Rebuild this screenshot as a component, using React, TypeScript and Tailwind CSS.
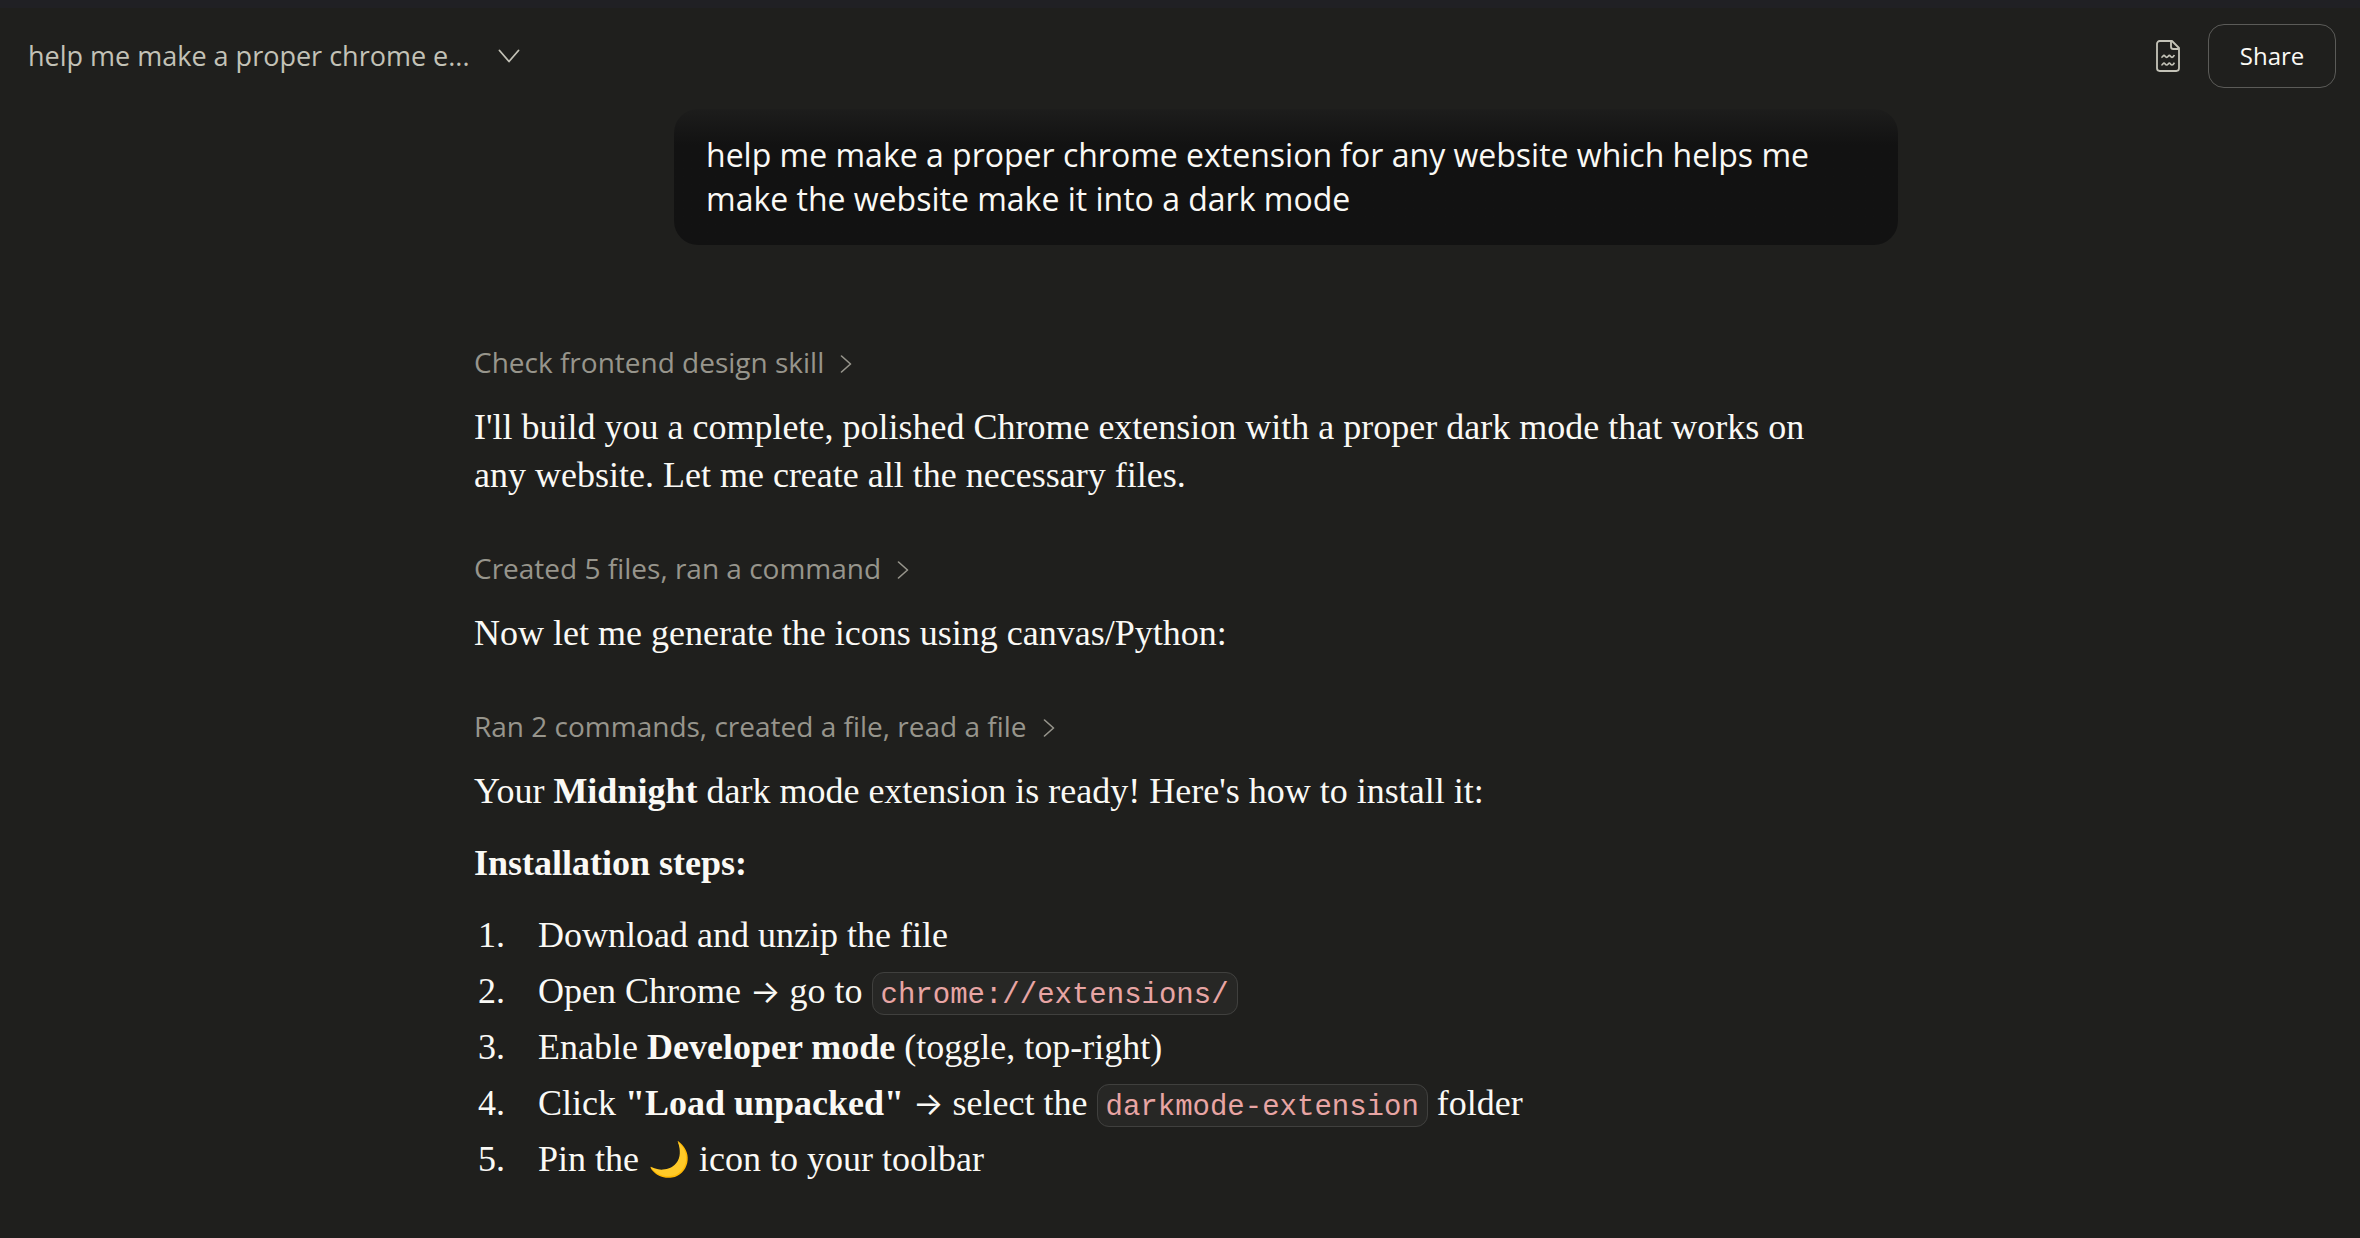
import type { ReactNode } from 'react';

function ChevronDown() {
  return (
    <svg className="w-[22px] h-[14px]" viewBox="0 0 22 14" fill="none" stroke="currentColor" strokeWidth="1.8">
      <path d="M1.5 1.5 11 12.500l9.500-11" strokeLinecap="round" strokeLinejoin="round" />
    </svg>
  );
}

function ChevronRight() {
  return (
    <svg className="w-3 h-[18px] mt-1" viewBox="0 0 12 18" fill="none" stroke="currentColor" strokeWidth="1.6">
      <path d="M1.500 1 10.500 9l-9 8" strokeLinecap="round" strokeLinejoin="round" />
    </svg>
  );
}

function FileIcon() {
  return (
    <svg className="w-6 h-8" viewBox="0 0 72 96" fill="none" stroke="currentColor" strokeWidth="5.500" strokeLinejoin="round">
      <path d="M48 3H11a8 8 0 0 0-8 8v74a8 8 0 0 0 8 8h50a8 8 0 0 0 8-8V24Z" />
      <path d="M45 4v16a7 7 0 0 0 7 7h16" />
      <path
        d="M16 52c4 0 5-6 8-6s4 6 8 6 5-6 8-6 4 6 8 6 5-3 7-7M16 75c4 0 5-6 8-6s4 6 8 6 5-6 8-6 4 6 8 6 5-3 7-7"
        strokeWidth="5"
      />
    </svg>
  );
}

function Header() {
  return (
    <header className="flex items-center justify-between pt-4 pl-7 pr-6 font-['Open_Sans',sans-serif]">
      <button type="button" className="flex items-center gap-7 text-[27px] leading-10 text-[#c3c2b7]">
        help me make a proper chrome e...
        <ChevronDown />
      </button>
      <div className="flex items-center gap-7">
        <button type="button" aria-label="Open file" className="text-[#c3c2b7]">
          <FileIcon />
        </button>
        <button
          type="button"
          className="w-32 h-16 border border-[#5b5b58] rounded-2xl text-2xl font-medium text-[#faf9f5]">
          Share
        </button>
      </div>
    </header>
  );
}

function Step({ children }: { children: ReactNode }) {
  return (
    <button
      type="button"
      className="flex items-center gap-4 mt-[49px] mb-[21px] text-[28px] leading-10 text-[#97958c] font-['Open_Sans',sans-serif]">
      {children}
      <ChevronRight />
    </button>
  );
}

function Code({ children }: { children: ReactNode }) {
  return (
    <code className="px-2 pt-[6px] pb-[2px] border border-[#40403e] rounded-xl bg-[#272725] text-[29px] leading-none text-[#e8a5a4] font-['Liberation_Mono',monospace]">
      {children}
    </code>
  );
}

function Arrow() {
  return <span className="text-[32px] leading-none font-['Inter',sans-serif]">→</span>;
}

function App() {
  return (
    <div className="min-h-screen bg-[#1f1f1d]">
      <div className="h-2 bg-[#202024]" />
      <Header />
      <main className="pl-3 pt-[21px] pb-10">
        <div className="max-w-[1424px] mx-auto">
          <div className="flex justify-end">
            <p className="max-w-[1224px] px-8 py-6 rounded-3xl bg-linear-to-b from-[#1d1d1c] to-[#121212] to-[36px] text-[32px] leading-[44px] text-[#faf9f5] font-['Open_Sans',sans-serif]">
              help me make a proper chrome extension for any website which helps me make the website make it into a
              dark mode
            </p>
          </div>
          <div className="pt-12 pr-12 text-[36px] leading-[48px] text-[#faf9f5] font-['Liberation_Serif',serif]">
            <Step>Check frontend design skill</Step>
            <p>
              I'll build you a complete, polished Chrome extension with a proper dark mode that works on any website.
              Let me create all the necessary files.
            </p>
            <Step>Created 5 files, ran a command</Step>
            <p>Now let me generate the icons using canvas/Python:</p>
            <Step>Ran 2 commands, created a file, read a file</Step>
            <p>
              Your <strong>Midnight</strong> dark mode extension is ready! Here's how to install it:
            </p>
            <p className="mt-6">
              <strong>Installation steps:</strong>
            </p>
            <ol className="flex flex-col gap-2 mt-6 pl-10 list-decimal *:pl-6">
              <li>Download and unzip the file</li>
              <li>
                Open Chrome <Arrow /> go to <Code>chrome://extensions/</Code>
              </li>
              <li>
                Enable <strong>Developer mode</strong> (toggle, top-right)
              </li>
              <li>
                Click <strong>"Load unpacked"</strong> <Arrow /> select the <Code>darkmode-extension</Code> folder
              </li>
              <li>
                Pin the <span className="text-[34px] leading-none">🌙</span> icon to your toolbar
              </li>
            </ol>
          </div>
        </div>
      </main>
    </div>
  );
}

export default App;
